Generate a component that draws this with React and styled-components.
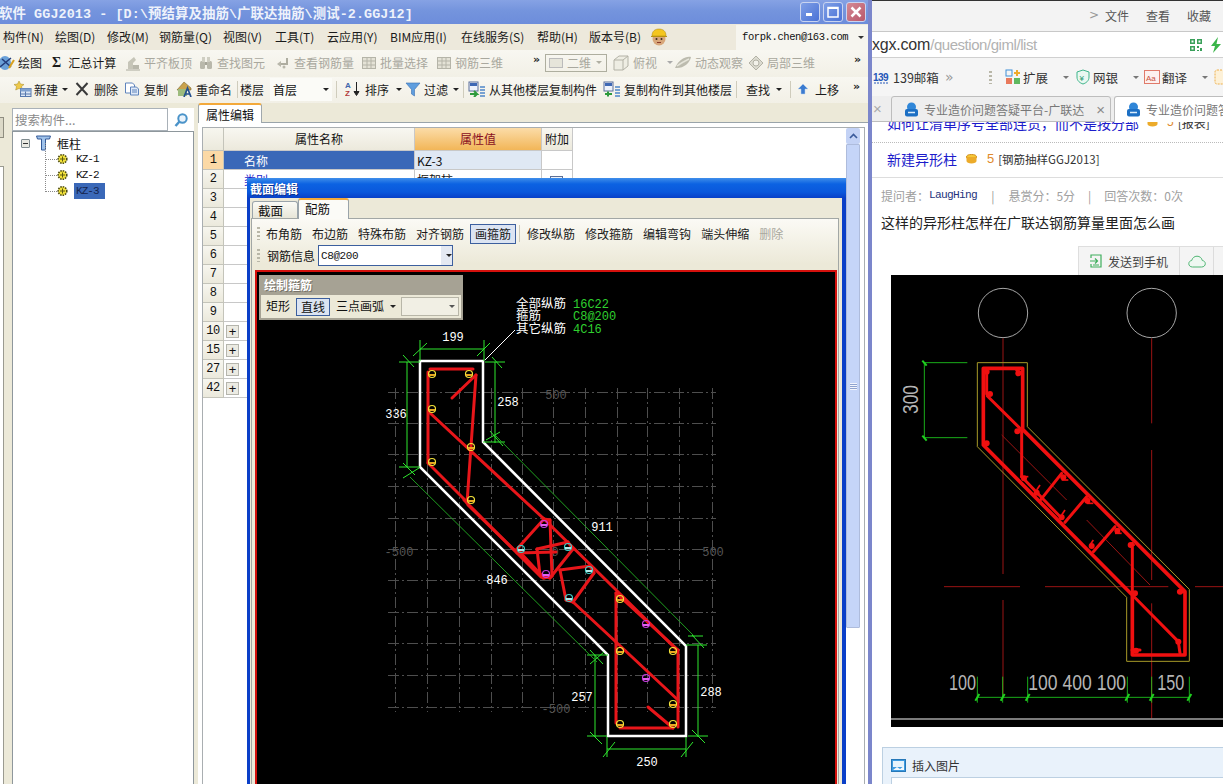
import React from "react";
import styled, { createGlobalStyle } from "styled-components";

const CN = `"Noto Sans CJK SC", "Liberation Sans", sans-serif`;
const MONO = `"Liberation Mono", "Noto Sans CJK SC", monospace`;

const GlobalStyle = createGlobalStyle`
  html, body { margin: 0; padding: 0; background: #fff; }
  body { font-family: ${CN}; font-size: 12px; color: #111; }
  * { box-sizing: border-box; }
`;

const Screen = styled.div`
  display: flex;
  width: 1223px;
  height: 784px;
  overflow: hidden;
`;

/* ---------- left window ---------- */

const LeftWindow = styled.div`
  position: relative;
  width: 872px;
  height: 784px;
  flex: none;
  display: flex;
  flex-direction: column;
  background: #ece9d8;
  border-right: 4px solid #7b86cb;
  overflow: hidden;
`;

const TitleBar = styled.div`
  height: 24px;
  flex: none;
  display: flex;
  align-items: center;
  padding-right: 2px;
  background: linear-gradient(180deg, #86a2e4 0%, #7494dd 45%, #6d8ddb 100%);
`;

const TitleText = styled.div`
  margin-left: -1px;
  font-family: ${MONO};
  font-size: 13.4px;
  font-weight: 700;
  letter-spacing: 0.1px;
  color: #eef2fb;
  white-space: pre;
`;

const WinButtons = styled.div`
  margin-left: auto;
  display: flex;
  gap: 3px;
`;

const WinButton = styled.div`
  width: 20px;
  height: 20px;
  display: flex;
  align-items: center;
  justify-content: center;
  border: 1px solid #c9d4f0;
  border-radius: 3px;
  background: ${(p) =>
    p.$close
      ? "linear-gradient(135deg, #d48a94, #b9586c)"
      : "linear-gradient(135deg, #7f9fe6, #4a72d6)"};
`;

const MenuBar = styled.div`
  height: 26px;
  flex: none;
  display: flex;
  align-items: center;
  padding-left: 3px;
  background: #ede9dc;
`;

const MenuItem = styled.div`
  width: ${(p) => p.$w}px;
  flex: none;
  margin-top: -2px;
  color: #1a1a1a;
  white-space: nowrap;
`;

const Account = styled.div`
  margin-left: auto;
  width: 132px;
  height: 25px;
  display: flex;
  align-items: center;
  justify-content: space-between;
  padding: 0 4px 0 6px;
  background: #f6f5ef;
  font-family: ${MONO};
  font-size: 10.5px;
  letter-spacing: -0.4px;
`;

const ToolBar = styled.div`
  height: ${(p) => p.$h}px;
  flex: none;
  display: flex;
  align-items: center;
  padding-left: ${(p) => p.$pad || 0}px;
  padding-bottom: 2px;
  background: linear-gradient(180deg, #f8f7f1 0%, #f2f0e6 100%);
`;

const ToolItem = styled.div`
  width: ${(p) => p.$w}px;
  flex: none;
  display: flex;
  align-items: center;
  gap: ${(p) => (p.$gap === undefined ? 3 : p.$gap)}px;
  margin-left: ${(p) => p.$ml || 0}px;
  white-space: nowrap;
  color: ${(p) => (p.$off ? "#a9a89e" : "#1a1a1a")};
`;

const SumMark = styled.b`
  font-family: "Liberation Serif", serif;
  font-size: 14px;
`;

const ToolSep = styled.div`
  width: 1px;
  height: 17px;
  margin: 0 ${(p) => (p.$mr === undefined ? p.$m || 3 : p.$mr)}px 0 ${(p) => p.$m || 3}px;
  flex: none;
  background: #cfccbc;
`;

const Caret = styled.span`
  width: 0;
  height: 0;
  flex: none;
  margin-left: ${(p) => p.$m || 4}px;
  border-left: 3px solid transparent;
  border-right: 3px solid transparent;
  border-top: 3px solid ${(p) => p.$c || "#222"};
`;

const More = styled.div`
  font-family: "DejaVu Sans", sans-serif;
  font-size: 11px;
  font-weight: 700;
  margin-top: -6px;
  color: #222;
  flex: none;
  width: ${(p) => p.$w || 12}px;
`;

const ViewSelect = styled.div`
  width: 62px;
  height: 18px;
  flex: none;
  display: flex;
  align-items: center;
  gap: 4px;
  padding: 0 3px;
  border: 1px solid #aeae9f;
  color: #a9a89e;
`;

const FloorSelect = styled.div`
  width: 62px;
  height: 23px;
  flex: none;
  display: flex;
  align-items: center;
  justify-content: space-between;
  padding: 0 3px;
  background: #fbfbf7;
`;

const Body = styled.div`
  flex: 1;
  min-height: 0;
  display: flex;
`;

const LeftRail = styled.div`
  width: 12px;
  flex: none;
  padding-top: 14px;
`;

const RailButton = styled.div`
  width: 4px;
  height: 21px;
  background: #dcd9c8;
  border: 1px solid #8f8d80;
  border-left: 0;
`;

const RailColumn = styled.div`
  width: 4px;
  height: 620px;
  margin-top: 28px;
  background: #fff;
  border-right: 1px solid #9a9a90;
  border-top: 1px solid #9a9a90;
`;

const Sidebar = styled.div`
  width: 182px;
  flex: none;
  display: flex;
  flex-direction: column;
  padding-top: 5px;
`;

const SearchRow = styled.div`
  height: 24px;
  flex: none;
  display: flex;
  background: #fff;
  border-bottom: 1px solid #8e979c;
`;

const SearchInput = styled.div`
  width: 156px;
  height: 23px;
  padding-left: 2px;
  line-height: 21px;
  font-size: 12.5px;
  color: #8a8a8a;
  border: 1px solid #a9b1b8;
`;

const SearchButton = styled.div`
  flex: 1;
  display: flex;
  align-items: center;
  justify-content: center;
`;

const TreePanel = styled.div`
  flex: 1;
  background: #fff;
  border-left: 1px solid #8e979c;
  border-right: 1px solid #8e979c;
  padding: 3px 0 0 8px;
`;

const TreeRoot = styled.div`
  display: flex;
  align-items: center;
  height: 16px;
  gap: 6px;
`;

const Expander = styled.div`
  width: 9px;
  height: 9px;
  flex: none;
  border: 1px solid #7f8b8f;
  border-radius: 1px;
  background: #e9e9e2;
  display: flex;
  align-items: center;
  justify-content: center;
  &::after {
    content: "";
    width: 5px;
    height: 1px;
    background: #333;
  }
`;

const TreeBranch = styled.div`
  margin-left: 36px;
`;

const TreeRow = styled.div`
  position: relative;
  height: 16px;
  display: flex;
  align-items: center;
  gap: 6px;
  &::before {
    content: "";
    position: absolute;
    left: -12px;
    top: -8px;
    width: 11px;
    height: 16px;
    border-left: 1px dotted #8a8a8a;
    border-bottom: 1px dotted #8a8a8a;
  }
`;

const TreeLabel = styled.div`
  width: 31px;
  height: 16px;
  padding-left: 2px;
  line-height: 16px;
  font-family: ${MONO};
  font-size: 11px;
  letter-spacing: -0.95px;
  color: ${(p) => (p.$sel ? "#15244e" : "#111")};
  background: ${(p) => (p.$sel ? "#3a68b8" : "transparent")};
`;

const MainPanel = styled.div`
  margin-left: 4px;
  flex: 1;
  min-width: 0;
  display: flex;
  flex-direction: column;
`;

const PanelTab = styled.div`
  width: 64px;
  height: 20px;
  flex: none;
  padding-left: 7px;
  line-height: 19px;
  background: #fff;
  border-top: 2px solid #f3a93a;
  border-left: 1px solid #a0a8ac;
  border-right: 1px solid #a0a8ac;
  border-radius: 3px 3px 0 0;
  margin-bottom: -1px;
  position: relative;
  z-index: 1;
`;

const PanelBody = styled.div`
  flex: 1;
  min-height: 0;
  display: flex;
  background: #fff;
  border-top: 1px solid #9aa4aa;
  padding: 4px 3px 0 4px;
`;

const TableFrame = styled.div`
  flex: 1;
  display: flex;
  border: 1px solid #a9aeb1;
  border-bottom: 0;
`;

const Grid = styled.div`
  flex: 1;
`;

const GridRow = styled.div`
  display: flex;
  height: ${(p) => p.$h}px;
`;

const NumCell = styled.div`
  width: 21px;
  flex: none;
  display: flex;
  align-items: center;
  justify-content: center;
  font-family: ${MONO};
  font-size: 12px;
  letter-spacing: -0.5px;
  border-bottom: 1px solid #c4c4ba;
  border-right: 1px solid #c4c4ba;
  background: ${(p) =>
    p.$on ? "#fbd9a6" : "linear-gradient(180deg, #f7f6ef, #ebe9dc)"};
`;

const Cell = styled.div`
  width: ${(p) => p.$w}px;
  flex: none;
  display: flex;
  align-items: center;
  padding-left: ${(p) => p.$pad || 0}px;
  border-bottom: 1px solid #c8c8c8;
  border-right: 1px solid #c8c8c8;
  background: ${(p) => p.$bg || "#fff"};
  color: ${(p) => p.$c || "#111"};
`;

const HeadCell = styled(Cell)`
  justify-content: center;
  padding: 0 0 2px;
  background: ${(p) =>
    p.$hot
      ? "linear-gradient(180deg, #fbdca8, #f2b658)"
      : "linear-gradient(180deg, #f8f7f1, #ece9dc)"};
  color: ${(p) => (p.$hot ? "#8a0f22" : "#111")};
`;

const PlusBox = styled.div`
  width: 13px;
  height: 13px;
  border: 1px solid #b5b5ad;
  background: #ecebe3;
  display: flex;
  align-items: center;
  justify-content: center;
  font-family: "Liberation Sans", sans-serif;
  font-size: 13px;
  line-height: 1;
  margin-left: 2px;
`;

const CheckBox = styled.div`
  width: 13px;
  height: 13px;
  margin: 6px 0 0 8px;
  border: 1px solid #5c6f96;
  background: #eef1f6;
`;

const ScrollBar = styled.div`
  width: 18px;
  flex: none;
  padding: 0 4px 0 0;
  display: flex;
  flex-direction: column;
`;

const ScrollUp = styled.div`
  height: 16px;
  flex: none;
  display: flex;
  align-items: center;
  justify-content: center;
  background: #c3d2f5;
  border-radius: 2px;
  font-size: 9px;
`;

const ScrollThumb = styled.div`
  height: 484px;
  flex: none;
  background: #c5d5f8;
  border: 1px solid #aebcdc;
  border-radius: 1px;
  display: flex;
  align-items: center;
  justify-content: center;
  &::after {
    content: "";
    width: 7px;
    height: 7px;
    background: repeating-linear-gradient(180deg, #f2f5fd 0 1px, #8fa3cf 1px 2px);
  }
`;

/* ---------- section editor dialog ---------- */

const Dialog = styled.div`
  position: absolute;
  left: 247px;
  top: 178px;
  width: 599px;
  height: 620px;
  display: flex;
  flex-direction: column;
  background: #ece9d8;
  border: 3px solid #0a3fc8;
  border-width: 0 4px 0 3px;
`;

const DialogTitle = styled.div`
  height: 20px;
  flex: none;
  margin: 0 -4px 0 -3px;
  padding-left: 3px;
  display: flex;
  align-items: center;
  background: linear-gradient(180deg, #3f8eea 0%, #0c62e2 30%, #0a58dc 70%, #0840c8 100%);
  color: #fff;
  font-weight: 700;
  text-shadow: 1px 1px 0 #0a2f90;
`;

const DialogTabs = styled.div`
  height: 20px;
  flex: none;
  display: flex;
  align-items: flex-end;
  padding-left: 2px;
`;

const DialogTab = styled.div`
  height: ${(p) => (p.$on ? 21 : 17)}px;
  width: ${(p) => (p.$on ? 51 : 46)}px;
  flex: none;
  padding-left: ${(p) => (p.$on ? 6 : 5)}px;
  line-height: 17px;
  font-size: 12.5px;
  background: ${(p) => (p.$on ? "#fbfbf7" : "linear-gradient(180deg, #fafaf5, #e8e6d8)")};
  border: 1px solid #9aa4aa;
  border-bottom: 0;
  border-top: ${(p) => (p.$on ? "2px solid #f3a93a" : "1px solid #9aa4aa")};
  border-radius: 3px 3px 0 0;
  position: relative;
  z-index: 1;
  margin-bottom: ${(p) => (p.$on ? -1 : 0)}px;
`;

const DialogBody = styled.div`
  flex: 1;
  min-height: 0;
  margin-left: 1px;
  margin-right: 3px;
  padding: 4px 0 0 3px;
  display: flex;
  flex-direction: column;
  border: 1px solid #a2a7a5;
  border-bottom: 0;
  background: linear-gradient(180deg, #fbfaf5 0, #ece9d8 45px);
`;

const DialogRow = styled.div`
  height: ${(p) => p.$h}px;
  flex: none;
  display: flex;
  align-items: center;
`;

const Grip = styled.div`
  width: 3px;
  height: 13px;
  flex: none;
  margin: 0 6px 0 2px;
  background: repeating-linear-gradient(180deg, #b9b7a8 0 2px, transparent 2px 4px);
`;

const DialogAction = styled.div`
  flex: none;
  height: 20px;
  display: flex;
  align-items: center;
  white-space: nowrap;
  margin-right: ${(p) => (p.$on ? 0 : 10)}px;
  color: ${(p) => (p.$off ? "#a9a89e" : "#1a1a1a")};
  ${(p) =>
    p.$on
      ? `padding: 0 4px; background: #dce4f2; border: 1px solid #3c5f9e; margin-left: -4px;`
      : ""}
`;

const ActionGap = styled.span`
  width: 4px;
  flex: none;
`;

const RebarLabel = styled.div`
  margin-left: 1px;
  margin-right: 3px;
`;

const RebarSelect = styled.div`
  width: 135px;
  height: 21px;
  display: flex;
  align-items: center;
  justify-content: space-between;
  padding-left: 2px;
  background: #fff;
  border: 1px solid #3c5f9e;
  font-family: ${MONO};
  font-size: 11px;
  letter-spacing: -0.4px;
`;

const RebarArrow = styled.div`
  width: 11px;
  height: 19px;
  background: #e4e9f2;
  display: flex;
  align-items: center;
  justify-content: center;
`;

const Canvas = styled.div`
  position: relative;
  width: 582px;
  height: 520px;
  margin-top: 3px;
  flex: none;
  background: #000;
  border: 2px solid #d4100c;
  border-bottom: 0;
  svg { display: block; }
`;

const Palette = styled.div`
  position: absolute;
  left: 2px;
  top: 3px;
  width: 204px;
  height: 45px;
  background: #ece9d8;
  border: 2px solid #a6a294;
  border-top-width: 1px;
  display: flex;
  flex-direction: column;
`;

const PaletteTitle = styled.div`
  height: 19px;
  flex: none;
  padding-left: 3px;
  line-height: 18px;
  background: #a6a294;
  color: #fff;
  font-weight: 700;
  text-shadow: 1px 1px 0 #77736a;
`;

const PaletteRow = styled.div`
  flex: 1;
  display: flex;
  align-items: center;
  padding-left: 5px;
`;

const PaletteBtn = styled.div`
  flex: none;
  height: 18px;
  line-height: 16px;
  margin-right: ${(p) => p.$mr || 0}px;
  ${(p) =>
    p.$on
      ? `padding: 0 4px; background: #dce4f2; border: 1px solid #3c5f9e;`
      : ""}
`;

const PaletteSelect = styled.div`
  width: 58px;
  height: 19px;
  margin-left: 5px;
  padding-right: 3px;
  display: flex;
  align-items: center;
  justify-content: flex-end;
  background: #f1efe4;
  border: 1px solid #b8b6a8;
`;

/* ---------- right browser window ---------- */

const RightWindow = styled.div`
  flex: 1;
  min-width: 0;
  height: 784px;
  display: flex;
  flex-direction: column;
  background: #fff;
  overflow: hidden;
`;

const BrowserTop = styled.div`
  height: 32px;
  flex: none;
  display: flex;
  align-items: center;
  padding-left: 217px;
  background: #f3f3f3;
  border-top: 1px solid #333;
  border-bottom: 1px solid #c8c8c8;
  color: #444;
`;

const TopLink = styled.div`
  flex: none;
  width: ${(p) => p.$w}px;
  margin-top: -2px;
  color: #555;
`;

const TopChevron = styled(TopLink)`
  font-family: "DejaVu Sans", sans-serif;
  color: #999;
`;

const AddressBar = styled.div`
  height: 26px;
  flex: none;
  display: flex;
  align-items: center;
  background: #fff;
  border-bottom: 1px solid #d0d0d0;
  font-family: "Liberation Sans", sans-serif;
  font-size: 16px;
  white-space: nowrap;
`;

const Host = styled.span`
  color: #333;
  letter-spacing: -0.2px;
`;

const UrlPath = styled.span`
  color: #b2b2b2;
  font-size: 15px;
  letter-spacing: -0.45px;
`;

const AddressIcons = styled.div`
  margin-left: auto;
  display: flex;
  align-items: center;
  gap: 7px;
  padding-right: 1px;
`;

const BookmarkBar = styled.div`
  height: 38px;
  flex: none;
  display: flex;
  align-items: center;
  background: #f5f5f5;
  color: #333;
  padding-left: 1px;
`;

const Bookmark = styled.div`
  width: ${(p) => p.$w}px;
  flex: none;
  display: flex;
  align-items: center;
  gap: 2px;
  white-space: nowrap;
  font-size: 12.5px;
`;

const Chevrons = styled(Bookmark)`
  font-family: "DejaVu Sans", sans-serif;
  font-size: 14px;
  color: #999;
`;

const TabStrip = styled.div`
  height: 26px;
  flex: none;
  display: flex;
  align-items: flex-end;
  background: #eeeeee;
  color: #777;
  border-bottom: 1px solid #bdbdbd;
  position: relative;
  z-index: 2;
`;

const BrowserTab = styled.div`
  flex: none;
  width: ${(p) => p.$w}px;
  height: 26px;
  margin-left: ${(p) => p.$ml || 0}px;
  margin-bottom: -1px;
  display: flex;
  align-items: center;
  gap: 5px;
  padding-left: ${(p) => p.$pad || 12}px;
  white-space: nowrap;
  overflow: hidden;
  border: 1px solid #bdbdbd;
  border-bottom: ${(p) => (p.$on ? "0" : "1px solid #bdbdbd")};
  border-radius: 3px 3px 0 0;
  background: ${(p) => (p.$on ? "#fff" : "#eeeeee")};
  position: relative;
  z-index: 1;
`;

const TabClose = styled.div`
  flex: none;
  margin-left: 7px;
  font-family: "Liberation Sans", sans-serif;
  font-size: 15px;
  color: #8a8a8a;
`;

const CutTabClose = styled.div`
  width: 19px;
  flex: none;
  height: 24px;
  padding-left: 1px;
  line-height: 24px;
  font-family: "Liberation Sans", sans-serif;
  font-size: 15px;
  color: #aaa;
`;

const QuestionList = styled.div`
  flex: none;
  height: 56px;
  overflow: hidden;
  border-bottom: 1px solid #ddd;
`;

const ClippedRow = styled.div`
  height: 30px;
  margin-top: -9px;
  padding: 0 0 0 15px;
  display: flex;
  align-items: flex-start;
  white-space: nowrap;
  border-bottom: 1px dotted #bbb;
`;

const Reward = styled.span`
  flex: none;
  color: #e08a2c;
  font-family: "Liberation Sans", sans-serif;
  font-size: ${(p) => p.$s || 12}px;
  margin: ${(p) => p.$top || 0}px ${(p) => p.$m || 8}px 0;
  line-height: 18px;
`;

const LinkText = styled.span`
  flex: none;
  color: ${(p) => p.$c || "#1c1ccb"};
  font-size: ${(p) => p.$s || 12}px;
  margin-left: ${(p) => p.$ml || 0}px;
  margin-top: ${(p) => p.$top || 0}px;
  white-space: nowrap;
`;

const QuestionTitle = styled.div`
  height: 31px;
  padding-left: 15px;
  display: flex;
  align-items: center;
`;

const MetaRow = styled.div`
  flex: none;
  margin-top: 7px;
  height: 20px;
  padding-left: 9px;
  display: flex;
  align-items: center;
  color: #a0a0a0;
  white-space: nowrap;
`;

const MetaSep = styled.span`
  margin: 0 ${(p) => p.$m || 13}px;
  color: #999;
`;

const Asker = styled.span`
  font-family: ${MONO};
  font-size: 11.2px;
  letter-spacing: -0.7px;
  color: #26357d;
`;

const QuestionText = styled.div`
  flex: none;
  margin-top: 7px;
  padding-left: 9px;
  height: 20px;
  line-height: 20px;
  font-size: 14px;
  color: #222;
  white-space: nowrap;
`;

const ShareBar = styled.div`
  flex: none;
  height: 29px;
  margin-top: 14px;
  margin-left: 206px;
  width: 160px;
  display: flex;
  align-items: center;
  background: #f4f4f4;
  border: 1px solid #dedede;
  border-bottom: 0;
`;

const ShareItem = styled.div`
  width: ${(p) => p.$w}px;
  height: 100%;
  flex: none;
  display: flex;
  align-items: center;
  justify-content: center;
  gap: 6px;
  border-right: 1px solid #dcdcdc;
  color: #444;
`;

const CadImage = styled.div`
  flex: none;
  margin-left: 19px;
  width: 332px;
  height: 452px;
  background: #000;
  svg { display: block; }
`;

const InsertPanel = styled.div`
  flex: none;
  height: 60px;
  margin: 20px -20px 0 10px;
  padding: 8px 0 0 8px;
  display: flex;
  flex-direction: column;
  background: #e9f2fb;
  border: 1px solid #bcd0e2;
`;

const InsertHead = styled.div`
  display: flex;
  align-items: center;
  gap: 6px;
  height: 18px;
  color: #333;
`;

const InsertBox = styled.div`
  flex: 1;
  margin-top: 3px;
  background: #fff;
  border: 1px solid #bcd0e2;
`;

/* ---------- icons ---------- */

const IconSvg = styled.svg`
  flex: none;
  display: block;
`;

const Ic = ({ w = 16, h = 16, children }) => (
  <IconSvg width={w} height={h} viewBox={`0 0 ${w} ${h}`}>
    {children}
  </IconSvg>
);

const GridIcon = () => (
  <Ic>
    <rect x="1.5" y="2.5" width="13" height="11" fill="#e4e2d6" stroke="#b5b4a8" />
    <path d="M1.5 6h13M1.5 10h13M6 2.5v11M10 2.5v11" stroke="#b5b4a8" />
  </Ic>
);

const GlobeIcon = () => (
  <Ic>
    <ellipse cx="5" cy="8" rx="6" ry="7" fill="#6aa0d8" />
    <path d="M0 12 L11 3 M2 4 L11 12" stroke="#223c7a" strokeWidth="1.5" />
    <path d="M9 13 L14 5" stroke="#d8a020" strokeWidth="2" />
  </Ic>
);

const BoxOff = () => (
  <Ic>
    <path d="M3 14V7l6-5 2 3-3 3v6z" fill="#c6c5b8" />
    <rect x="8" y="10" width="6" height="4" fill="#b8b7ab" />
    <path d="M1 15h14" stroke="#aaa99c" />
  </Ic>
);

const BinocularsOff = () => (
  <Ic>
    <rect x="2" y="6" width="5" height="8" rx="1.5" fill="#b9b8ab" />
    <rect x="9" y="6" width="5" height="8" rx="1.5" fill="#b9b8ab" />
    <rect x="4" y="2" width="3" height="5" fill="#cfcec2" />
    <rect x="9" y="2" width="3" height="5" fill="#cfcec2" />
    <rect x="7" y="7" width="2" height="3" fill="#a5a497" />
  </Ic>
);

const HookOff = () => (
  <Ic>
    <path d="M12 3v6H5" fill="none" stroke="#aeada0" strokeWidth="2" />
    <path d="M6 6 L2 9 L6 12z" fill="#b8b7aa" />
    <circle cx="9" cy="12" r="1.5" fill="#b8b7aa" />
  </Ic>
);

const CubeOff = () => (
  <Ic w={18} h={18}>
    <path d="M2 6l5-4h9v10l-5 4H2z" fill="#eeede3" stroke="#b3b2a6" />
    <path d="M2 6h9v10M11 6l5-4" fill="none" stroke="#b3b2a6" />
  </Ic>
);

const OrbitOff = () => (
  <Ic w={18} h={16}>
    <path d="M1 13C5 4 12 1 17 2c-1 6-8 12-16 11z" fill="#bcbbae" />
    <path d="M3 11c4-3 8-5 12-7" stroke="#e6e5da" strokeWidth="1.4" />
  </Ic>
);

const PartOff = () => (
  <Ic>
    <path d="M8 1l7 7-7 7-7-7z" fill="#dcdbd0" stroke="#b3b2a6" />
    <circle cx="8" cy="8" r="3" fill="#f3f2ea" stroke="#b3b2a6" />
  </Ic>
);

const NewIcon = () => (
  <Ic w={18}>
    <path d="M5 0l1.5 3 3.5.5-2.5 2 .8 3.500L5 7.500 1.700 9l.8-3.500L0 3.500 3.500 3z" fill="#eec94a" stroke="#a48824" strokeWidth=".5" />
    <rect x="6.500" y="7.500" width="10.500" height="8" fill="#dbe6f5" stroke="#5678ad" />
    <rect x="6.500" y="7.500" width="10.500" height="3" fill="#7ea0cf" />
    <path d="M6.500 13h10.500M11.500 10.500V15.500" stroke="#5678ad" />
  </Ic>
);

const CrossIcon = () => (
  <Ic w={14}>
    <path d="M1.500 2 L12.500 14 M12.500 2 L1.500 14" stroke="#3a3a3a" strokeWidth="2" />
  </Ic>
);

const CopyIcon = () => (
  <Ic>
    <path d="M1.500 2h7l2 2v8h-9z" fill="#fff" stroke="#5f84bc" />
    <path d="M6.500 6h6l2 2v6h-8z" fill="#dfe9f7" stroke="#5f84bc" />
    <path d="M8 9h5M8 11h5" stroke="#5f84bc" />
  </Ic>
);

const RenameIcon = () => (
  <Ic>
    <path d="M1 9L8 1l7 6v2z" fill="#c9a24c" stroke="#7e6a30" strokeWidth=".6" />
    <rect x="2" y="8" width="9" height="7" fill="#9dbb7d" />
    <path d="M8 16l3.500-9 3.500 9M9.500 13h4" fill="none" stroke="#23508f" strokeWidth="1.700" />
  </Ic>
);

const SortIcon = () => (
  <Ic>
    <text x="0" y="7" fontFamily="Liberation Sans" fontSize="8" fontWeight="700" fill="#3f66ab">A</text>
    <text x="0" y="15" fontFamily="Liberation Sans" fontSize="8" fontWeight="700" fill="#b23a3a">Z</text>
    <path d="M11.500 1v12M9 10.500l2.500 4 2.500-4z" fill="#222" stroke="#222" />
  </Ic>
);

const FunnelIcon = () => (
  <Ic>
    <path d="M1 2h14L9.500 8.500V15L6.500 13V8.500z" fill="#5f9ede" stroke="#3b6fb0" strokeWidth=".6" />
  </Ic>
);

const FloorCopyIcon = ({ flip }) => (
  <Ic w={18}>
    <rect x="1" y="1" width="9" height="9" fill="#eef2fa" stroke="#5b6f9a" />
    <rect x="2" y="2" width="7" height="3" fill="#3e68b4" />
    <path d="M12 6h5M12 9h5M12 12h5M12 15h5" stroke="#4f87c9" strokeWidth="1.500" />
    <path d={flip ? "M2 13h7M5 10.500v5" : "M2 13h7l-3-3M9 13l-3 3"} stroke="#2d9a3c" strokeWidth="2" fill="none" />
  </Ic>
);

const UpIcon = () => (
  <Ic w={12} h={12}>
    <path d="M6 1l5 5H8v5H4V6H1z" fill="#3b7bd0" stroke="#b9d2ef" strokeWidth=".5" />
  </Ic>
);

const Helmet = () => (
  <Ic w={18} h={18}>
    <circle cx="9" cy="11" r="6.500" fill="#d8a77a" />
    <path d="M2 8c0-5 3-7 7-7s7 2 7 7z" fill="#f4c61f" stroke="#a88510" strokeWidth=".5" />
    <path d="M1 8.500h16" stroke="#b79212" strokeWidth="1" />
    <circle cx="6.500" cy="11" r="1" fill="#3a2a20" />
    <circle cx="11.500" cy="11" r="1" fill="#3a2a20" />
    <path d="M7 14.500h4" stroke="#8a3a2a" />
  </Ic>
);

const SearchGlass = () => (
  <Ic>
    <circle cx="9.500" cy="6.500" r="4.200" fill="#eaf3fb" stroke="#4a93c9" strokeWidth="2" />
    <path d="M6.500 9.500 L2.500 14" stroke="#4a93c9" strokeWidth="2.500" />
  </Ic>
);

const ColumnIcon = () => (
  <Ic w={15} h={16}>
    <path d="M0.500 1h14l-1 3H9.500v11h-4V4H1.500z" fill="#9fc2ea" stroke="#345a98" strokeWidth="1" />
  </Ic>
);

const GearIcon = () => (
  <Ic w={11} h={12}>
    <circle cx="5.500" cy="6" r="4.300" fill="#f3e23a" stroke="#4b4a10" strokeDasharray="1.500 1" strokeWidth="1.600" />
    <path d="M3 6h5M5.500 3.500v5" stroke="#5c5a12" />
  </Ic>
);

const QrIcon = () => (
  <Ic w={14} h={14}>
    <path d="M1 1h5v5H1zM8 1h5v5H8zM1 8h5v5H1zM8 8h2v2H8zM11 10h2v3h-2zM8 12h2v1H8z" fill="#3aa05a" />
    <path d="M2.500 2.500h2v2h-2zM9.500 2.500h2v2h-2zM2.500 9.500h2v2h-2z" fill="#fff" />
  </Ic>
);

const BoltIcon = () => (
  <Ic w={12} h={16}>
    <path d="M8 0L1 9h4l-2 7 8-9H6.500z" fill="#3bb54a" />
  </Ic>
);

const MailIcon = () => (
  <Ic w={18} h={14}>
    <text x="0" y="11" fontFamily="Liberation Sans" fontSize="10" fontWeight="700" fill="#2456b8" letterSpacing="-.5">139</text>
    <path d="M1 13h15" stroke="#2456b8" strokeDasharray="2 1" />
  </Ic>
);

const ExtendIcon = () => (
  <Ic w={16} h={16}>
    <rect x="1" y="1" width="6" height="6" fill="none" stroke="#3f8fd8" />
    <rect x="1" y="9" width="6" height="6" fill="#e9795c" />
    <rect x="9" y="9" width="6" height="6" fill="#60b860" />
    <path d="M12 1v6M9 4h6" stroke="#efaa2c" strokeWidth="2" />
  </Ic>
);

const ShieldIcon = () => (
  <Ic w={16} h={16}>
    <path d="M8 1l6 2v5c0 4-3 6-6 7-3-1-6-3-6-7V3z" fill="#e9f8f1" stroke="#3fb58b" />
    <text x="4.500" y="11.500" fontFamily="Liberation Sans" fontSize="8" fill="#2d9c74">¥</text>
  </Ic>
);

const TranslateIcon = () => (
  <Ic w={16} h={16}>
    <rect x=".5" y="1.500" width="15" height="13" fill="#fdf0ee" stroke="#e07a6a" />
    <text x="2" y="11.500" fontFamily="Liberation Sans" fontSize="8" fill="#c8503e">Aa</text>
  </Ic>
);

const OrangeIcon = () => (
  <Ic w={16} h={16}>
    <rect x="1" y="1" width="14" height="14" rx="2" fill="#fdf1d8" stroke="#eeb04c" strokeDasharray="2 1" />
  </Ic>
);

const SiteIcon = () => (
  <Ic w={15} h={15}>
    <circle cx="7.500" cy="5" r="4.500" fill="#2f86d8" />
    <rect x="1" y="7" width="13" height="7.500" rx="2" fill="#1c6fc4" />
    <path d="M4 10.500h7" stroke="#d9ecfb" strokeWidth="1.500" />
  </Ic>
);

const CoinIcon = () => (
  <Ic w={11} h={10}>
    <ellipse cx="5.500" cy="3" rx="5" ry="2.500" fill="#f5c838" stroke="#d18f1c" />
    <path d="M.5 3v4c0 1.400 2.200 2.500 5 2.500s5-1.100 5-2.500V3" fill="#ecab2a" />
  </Ic>
);

const PhoneSendIcon = () => (
  <Ic w={12} h={14}>
    <path d="M1 4V1h10v12H1v-3" fill="none" stroke="#3fae5d" strokeWidth="1.200" />
    <path d="M0 7h7M5 4.500L7.500 7 5 9.500" fill="none" stroke="#3fae5d" strokeWidth="1.200" />
    <path d="M3 11h6" stroke="#3fae5d" />
  </Ic>
);

const CloudIcon = () => (
  <Ic w={18} h={13}>
    <path d="M4.500 12C2 12 .8 10.300.8 8.700 .8 7 2 5.700 3.700 5.500 4.300 3 6.300 1.200 9 1.200c2.800 0 4.800 1.800 5.300 4.300 1.700.2 3 1.500 3 3.200S16 12 13.500 12z" fill="#eef8f1" stroke="#4fb573" />
  </Ic>
);

const PictureIcon = () => (
  <Ic w={15} h={13}>
    <rect x=".5" y=".5" width="14" height="12" fill="#3d9ae0" stroke="#2678b8" />
    <rect x="2" y="2" width="11" height="6" fill="#e6f3fc" />
    <path d="M2 11l4-3 3 2 4-3v4z" fill="#f4f9fd" />
  </Ic>
);

/* ---------- CAD drawings ---------- */

const Lines = ({ data, color, width = 1, dash, cap = "butt" }) => (
  <g stroke={color} strokeWidth={width} strokeDasharray={dash} fill="none" strokeLinecap={cap}>
    {data.map((l, i) => (
      <line key={i} x1={l[0]} y1={l[1]} x2={l[2]} y2={l[3]} />
    ))}
  </g>
);

const gridX = [395, 427, 459, 491, 522, 553, 585, 617, 647, 679, 712];
const gridY = [392, 423, 454, 486, 518, 549, 580, 612, 643, 675, 707];

const greenDims = [
  [420, 349, 484, 349], [420, 340, 420, 361], [484, 340, 484, 361],
  [413, 356, 427, 343], [477, 356, 490, 343],
  [399, 362, 420, 362], [407, 362, 407, 467], [403, 355, 414, 367],
  [399, 467, 420, 467], [403, 463, 415, 475], [403, 478, 419, 468],
  [485, 362, 505, 362], [495, 362, 495, 443], [492, 357, 502, 368],
  [483, 442, 505, 442], [486, 440, 500, 432], [490, 431, 503, 446],
  [686, 645, 707, 645], [698, 645, 698, 737], [688, 636, 703, 636], [692, 635, 704, 648],
  [688, 736, 708, 736], [692, 730, 705, 743],
  [595, 655, 595, 737], [587, 655, 608, 655], [587, 736, 607, 736],
  [590, 650, 603, 664], [590, 664, 604, 652], [590, 732, 602, 744],
  [607, 749, 686, 749], [607, 737, 607, 757], [686, 737, 686, 757],
  [603, 757, 615, 742], [681, 757, 693, 742],
];

const thinGreens = [
  [495, 435, 695, 637],
  [410, 477, 597, 662],
];

const redBars = [
  [430, 369, 473, 369], [476, 375, 467, 503], [476, 375, 452, 398],
  [428, 372, 428, 463], [428, 463, 468, 503], [468, 505, 543, 578], [464, 500, 541, 577],
  [430, 413, 543, 518], [543, 518, 677, 650], [678, 650, 678, 727],
  [620, 728, 673, 728], [616, 593, 616, 723], [616, 642, 678, 700],
  [648, 707, 673, 728], [573, 602, 616, 642], [616, 593, 678, 650],
  [517, 549, 544, 519], [544, 519, 550, 520], [550, 520, 552, 576], [552, 576, 544, 578], [544, 578, 517, 549],
  [537, 549, 568, 542], [568, 542, 573, 549], [573, 549, 550, 578], [550, 578, 540, 575], [540, 575, 537, 549],
  [517, 553, 556, 552],
  [560, 570, 590, 566], [590, 566, 594, 573], [594, 573, 573, 602], [573, 602, 566, 600], [566, 600, 560, 570],
];

const yellowDots = [
  [432, 374], [469, 374], [432, 409], [471, 447], [432, 462], [471, 500],
  [620, 599], [673, 651], [620, 651], [673, 704], [620, 724], [673, 724],
];
const tealDots = [[521, 549], [568, 547], [589, 570], [569, 598]];
const pinkDots = [[544, 524], [546, 574], [646, 624], [646, 678]];

const Dots = ({ data, color, inner }) => (
  <g>
    {data.map((d, i) => (
      <g key={i}>
        <circle cx={d[0]} cy={d[1]} r="3.500" fill="none" stroke={color} strokeWidth="1.200" />
        <line x1={d[0] - 3} y1={d[1] + 1} x2={d[0] + 3} y2={d[1] + 1} stroke={inner || color} strokeWidth="2" />
      </g>
    ))}
  </g>
);

const CadLabel = styled.text`
  font-family: ${MONO};
  font-size: 12px;
  fill: ${(p) => p.$fill || "#fff"};
  text-anchor: ${(p) => p.$anchor || "middle"};
`;

const CnLabel = styled.text`
  font-family: ${CN};
  font-size: 12.5px;
  fill: #fff;
`;

const SectionDrawing = () => (
  <svg width="578" height="512" viewBox="257 272 578 512">
    <Lines
      color="#4e4e4e"
      dash="11 3 2 3"
      data={[
        ...gridX.map((x) => [x + 0.5, 388, x + 0.5, 712]),
        ...gridY.map((y) => [388, y + 0.5, 716, y + 0.5]),
      ]}
    />
    <CadLabel x="556" y="399" $fill="#555">500</CadLabel>
    <CadLabel x="399" y="556" $fill="#555">-500</CadLabel>
    <CadLabel x="555" y="556" $fill="#555">0</CadLabel>
    <CadLabel x="713" y="556" $fill="#555">500</CadLabel>
    <CadLabel x="556" y="713" $fill="#555">-500</CadLabel>

    <polygon
      points="420,361 483,361 483,442 686,646 686,736 608,736 608,655 420,467"
      fill="none"
      stroke="#fff"
      strokeWidth="2.500"
    />
    <Lines color="#2fe82f" data={greenDims} />
    <Lines color="#1f9e1f" data={thinGreens} />
    <Lines color="#e8161a" width="3" cap="round" data={redBars} />
    <Dots data={yellowDots} color="#f2e23a" inner="#e8a820" />
    <Dots data={tealDots} color="#3fd0c8" inner="#b0e8e8" />
    <Dots data={pinkDots} color="#c83ae0" inner="#e060f0" />

    <Lines color="#fff" data={[[485, 360, 515, 330]]} />
    <CnLabel x="516" y="307.500">全部纵筋</CnLabel>
    <CnLabel x="516" y="319.500">箍筋</CnLabel>
    <CnLabel x="516" y="333">其它纵筋</CnLabel>
    <CadLabel x="573" y="308" $anchor="start" $fill="#2fd02f">16C22</CadLabel>
    <CadLabel x="573" y="320" $anchor="start" $fill="#2fd02f">C8@200</CadLabel>
    <CadLabel x="573" y="333" $anchor="start" $fill="#2fd02f">4C16</CadLabel>

    <CadLabel x="453" y="341">199</CadLabel>
    <CadLabel x="396" y="418">336</CadLabel>
    <CadLabel x="508" y="406">258</CadLabel>
    <CadLabel x="602" y="531">911</CadLabel>
    <CadLabel x="497" y="584">846</CadLabel>
    <CadLabel x="582" y="701">257</CadLabel>
    <CadLabel x="711" y="696">288</CadLabel>
    <CadLabel x="647" y="766">250</CadLabel>
  </svg>
);

const outerTicks = [292, 368, 443, 742, 815, 928];

const rebarKnots = [
  [320, 305], [415, 310], [330, 372], [412, 484], [320, 520], [432, 625], [470, 668],
  [550, 622], [545, 742], [622, 692], [635, 828], [712, 782], [752, 825],
  [900, 965], [895, 1115], [768, 1142], [765, 970],
];

const RefDim = ({ x, y = 1260, len, rotate, children }) => (
  <text
    x={x}
    y={y}
    textLength={len}
    lengthAdjust="spacingAndGlyphs"
    transform={rotate ? `rotate(-90 ${x} ${y})` : undefined}
    fontFamily="Liberation Sans, sans-serif"
    fontSize="65"
    fill="#b5b5b5"
  >
    {children}
  </text>
);

const ReferenceDrawing = () => (
  <svg width="332" height="452" viewBox="33 15 996 1356">
    <circle cx="369" cy="129" r="74" fill="none" stroke="#c8c8c8" strokeWidth="2.500" />
    <circle cx="815" cy="129" r="74" fill="none" stroke="#c8c8c8" strokeWidth="2.500" />
    <Lines
      color="#9a1414"
      width="3"
      data={[
        [369, 205, 369, 912], [369, 990, 369, 1285],
        [815, 205, 815, 460], [815, 540, 815, 930], [815, 1000, 815, 1345],
        [192, 950, 420, 950], [495, 950, 865, 950], [945, 950, 1029, 950],
        [365, 495, 560, 690], [620, 750, 810, 945],
      ]}
    />
    <polyline
      points="292,278 442,278 442,470 928,958 928,1174 740,1174 740,982 292,530 292,278"
      fill="none"
      stroke="#a89a28"
      strokeWidth="3"
    />
    <polygon
      points="310,295 428,295 428,478 915,965 915,1155 757,1155 757,975 310,525"
      fill="none"
      stroke="#f01010"
      strokeWidth="11"
      strokeLinejoin="round"
    />
    <Lines
      color="#f01010"
      width="9"
      cap="round"
      data={[
        [320, 296, 320, 372], [322, 378, 425, 480], [425, 480, 425, 620], [425, 620, 545, 745],
        [757, 820, 757, 975], [757, 975, 895, 1115], [895, 1115, 900, 1150],
        [483, 688, 545, 610], [555, 757, 620, 680], [640, 845, 705, 770],
        [756, 1140, 780, 1140], [895, 965, 910, 965], [410, 300, 426, 312],
      ]}
    />
    <Lines
      color="#f01010"
      width="5"
      data={[
        [545, 630, 565, 630], [620, 700, 640, 700], [705, 790, 725, 790],
        [470, 660, 480, 645], [545, 735, 555, 720], [630, 825, 640, 810],
        [425, 620, 445, 620], [745, 825, 765, 825], [410, 482, 430, 482],
      ]}
    />
    {rebarKnots.map((k, i) => (
      <circle key={i} cx={k[0]} cy={k[1]} r="9" fill="#f01010" />
    ))}
    <Lines
      color="#1fd01f"
      width="2.500"
      data={[
        [133, 278, 262, 278], [133, 503, 262, 503], [133, 278, 133, 503],
        [292, 1282, 930, 1282],
        ...outerTicks.map((x) => [x, 1220, x, 1298]),
      ]}
    />
    <Lines
      color="#1fd01f"
      width="6"
      data={[
        [127, 272, 140, 287], [127, 497, 140, 512],
        ...outerTicks.map((x) => [x - 6, 1292, x + 6, 1272]),
      ]}
    />
    <RefDim x="207" len="81">100</RefDim>
    <RefDim x="445" len="293">100 400 100</RefDim>
    <RefDim x="832" len="81">150</RefDim>
    <RefDim x="113" y="432" len="87" rotate>300</RefDim>
    <rect x="33" y="1345" width="996" height="4" fill="#b8b8b8" />
  </svg>
);

/* ---------- data ---------- */

const menus = [
  ["构件(N)", 52], ["绘图(D)", 52], ["修改(M)", 52], ["钢筋量(Q)", 64], ["视图(V)", 52],
  ["工具(T)", 52], ["云应用(Y)", 63], ["BIM应用(I)", 71], ["在线服务(S)", 76],
  ["帮助(H)", 52], ["版本号(B)", 61],
];

const dialogActions = ["布角筋", "布边筋", "特殊布筋", "对齐钢筋"];
const dialogActions2 = ["修改纵筋", "修改箍筋", "编辑弯钩", "端头伸缩"];
const rowNumbers = [3, 4, 5, 6, 7, 8, 9];
const foldRows = [10, 15, 27, 42];

export default function App() {
  return (
    <>
      <GlobalStyle />
      <Screen>
        <LeftWindow>
          <TitleBar>
            <TitleText>软件 GGJ2013 - [D:\预结算及抽筋\广联达抽筋\测试-2.GGJ12]</TitleText>
            <WinButtons>
              <WinButton>
                <Ic w={10} h={10}><rect x="1" y="6" width="6" height="3" fill="#fff" /></Ic>
              </WinButton>
              <WinButton>
                <Ic w={12} h={12}><path d="M1 1.500h10v9.500H1z" fill="none" stroke="#fff" strokeWidth="1.500" /><path d="M1 2h10" stroke="#fff" strokeWidth="2" /></Ic>
              </WinButton>
              <WinButton $close>
                <Ic w={12} h={12}><path d="M1.500 1.500l9 9M10.500 1.500l-9 9" stroke="#fff" strokeWidth="2.500" /></Ic>
              </WinButton>
            </WinButtons>
          </TitleBar>

          <MenuBar>
            {menus.map(([label, w]) => (
              <MenuItem key={label} $w={w}>{label}</MenuItem>
            ))}
            <Helmet />
            <Account>
              forpk.chen@163.com
              <Caret $c="#333" />
            </Account>
          </MenuBar>

          <ToolBar $h={27}>
            <ToolItem $w={52} $gap={2}><GlobeIcon />绘图</ToolItem>
            <ToolItem $w={73} $gap={7}><SumMark>Σ</SumMark>汇总计算</ToolItem>
            <ToolItem $w={73} $off><BoxOff />平齐板顶</ToolItem>
            <ToolItem $w={77} $off><BinocularsOff />查找图元</ToolItem>
            <ToolItem $w={86} $off><HookOff />查看钢筋量</ToolItem>
            <ToolItem $w={75} $off><GridIcon />批量选择</ToolItem>
            <ToolItem $w={97} $off><GridIcon />钢筋三维</ToolItem>
            <More $w={12}>»</More>
            <ViewSelect>
              <Ic w={14} h={12}><rect x=".5" y="1.500" width="13" height="9" fill="#e6e5da" stroke="#bbb" /></Ic>
              二维
              <Caret $m={1} $c="#b0afa2" />
            </ViewSelect>
            <ToolItem $w={62} $ml={5} $off><CubeOff />俯视<Caret $m={7} $c="#aaa" /></ToolItem>
            <ToolItem $w={74} $off><OrbitOff />动态观察</ToolItem>
            <ToolItem $w={106} $off><PartOff />局部三维</ToolItem>
            <More>»</More>
          </ToolBar>

          <ToolBar $h={26} $pad={14}>
            <ToolItem $w={60} $gap={2}><NewIcon />新建<Caret $m={2} /></ToolItem>
            <ToolItem $w={49} $ml={1} $gap={5}><CrossIcon />删除</ToolItem>
            <ToolItem $w={52} $gap={4}><CopyIcon />复制</ToolItem>
            <ToolItem $w={59} $gap={4}><RenameIcon />重命名</ToolItem>
            <ToolSep $m={2} />
            <ToolItem $w={30}>楼层</ToolItem>
            <FloorSelect>首层<Caret /></FloorSelect>
            <ToolSep $m={4} $mr={8} />
            <ToolItem $w={60} $gap={4}><SortIcon />排序<Caret $m={3} /></ToolItem>
            <ToolItem $w={55} $gap={3}><FunnelIcon />过滤<Caret $m={2} /></ToolItem>
            <ToolSep $m={3} />
            <ToolItem $w={135} $ml={1} $gap={3}><FloorCopyIcon />从其他楼层复制构件</ToolItem>
            <ToolItem $w={130} $gap={3}><FloorCopyIcon flip />复制构件到其他楼层</ToolItem>
            <ToolSep $m={0} />
            <ToolItem $w={41} $ml={6}>查找<Caret $m={3} /></ToolItem>
            <ToolSep $m={0} />
            <ToolItem $w={56} $gap={6} $ml={3}><UpIcon />上移</ToolItem>
            <More>»</More>
          </ToolBar>

          <Body>
            <LeftRail>
              <RailButton />
              <RailColumn />
            </LeftRail>
            <Sidebar>
              <SearchRow>
                <SearchInput>搜索构件...</SearchInput>
                <SearchButton><SearchGlass /></SearchButton>
              </SearchRow>
              <TreePanel>
                <TreeRoot>
                  <Expander />
                  <ColumnIcon />
                  框柱
                </TreeRoot>
                <TreeBranch>
                  <TreeRow><GearIcon /><TreeLabel>KZ-1</TreeLabel></TreeRow>
                  <TreeRow><GearIcon /><TreeLabel>KZ-2</TreeLabel></TreeRow>
                  <TreeRow><GearIcon /><TreeLabel $sel>KZ-3</TreeLabel></TreeRow>
                </TreeBranch>
              </TreePanel>
            </Sidebar>

            <MainPanel>
              <PanelTab>属性编辑</PanelTab>
              <PanelBody>
                <TableFrame>
                  <Grid>
                    <GridRow $h={23}>
                      <NumCell />
                      <HeadCell $w={191}>属性名称</HeadCell>
                      <HeadCell $w={127} $hot>属性值</HeadCell>
                      <HeadCell $w={31}>附加</HeadCell>
                    </GridRow>
                    <GridRow $h={19}>
                      <NumCell $on>1</NumCell>
                      <Cell $w={191} $pad={20} $bg="#3a68b8" $c="#fff">名称</Cell>
                      <Cell $w={127} $pad={2} $bg="#dfe8f4">KZ-3</Cell>
                      <Cell $w={31} />
                    </GridRow>
                    <GridRow $h={19}>
                      <NumCell>2</NumCell>
                      <Cell $w={191} $pad={20} $c="#1c1ccb">类别</Cell>
                      <Cell $w={127} $pad={2}>框架柱</Cell>
                      <Cell $w={31}><CheckBox /></Cell>
                    </GridRow>
                    {rowNumbers.map((n) => (
                      <GridRow key={n} $h={19}>
                        <NumCell>{n}</NumCell>
                        <Cell $w={191} />
                      </GridRow>
                    ))}
                    {foldRows.map((n) => (
                      <GridRow key={n} $h={19}>
                        <NumCell>{n}</NumCell>
                        <Cell $w={191}><PlusBox>+</PlusBox></Cell>
                      </GridRow>
                    ))}
                  </Grid>
                  <ScrollBar>
                    <ScrollUp>
                      <Ic w={9} h={6}><path d="M1 5l3.500-3.500L8 5" fill="none" stroke="#3a5a9a" strokeWidth="1.600" /></Ic>
                    </ScrollUp>
                    <ScrollThumb />
                  </ScrollBar>
                </TableFrame>
              </PanelBody>
            </MainPanel>
          </Body>

          <Dialog>
            <DialogTitle>截面编辑</DialogTitle>
            <DialogTabs>
              <DialogTab>截面</DialogTab>
              <DialogTab $on>配筋</DialogTab>
            </DialogTabs>
            <DialogBody>
              <DialogRow $h={21}>
                <Grip />
                {dialogActions.map((t) => (
                  <DialogAction key={t}>{t}</DialogAction>
                ))}
                <DialogAction $on>画箍筋</DialogAction>
                <ToolSep $m={3} />
                <ActionGap />
                {dialogActions2.map((t) => (
                  <DialogAction key={t}>{t}</DialogAction>
                ))}
                <DialogAction $off>删除</DialogAction>
              </DialogRow>
              <DialogRow $h={23}>
                <Grip />
                <RebarLabel>钢筋信息</RebarLabel>
                <RebarSelect>
                  C8@200
                  <RebarArrow><Caret $m={0} /></RebarArrow>
                </RebarSelect>
              </DialogRow>
              <Canvas>
                <SectionDrawing />
                <Palette>
                  <PaletteTitle>绘制箍筋</PaletteTitle>
                  <PaletteRow>
                    <PaletteBtn $mr={6}>矩形</PaletteBtn>
                    <PaletteBtn $on $mr={6}>直线</PaletteBtn>
                    <PaletteBtn>三点画弧</PaletteBtn>
                    <Caret $m={6} />
                    <PaletteSelect><Caret $m={0} $c="#555" /></PaletteSelect>
                  </PaletteRow>
                </Palette>
              </Canvas>
            </DialogBody>
          </Dialog>
        </LeftWindow>

        <RightWindow>
          <BrowserTop>
            <TopChevron $w={16}>&gt;</TopChevron>
            <TopLink $w={41}>文件</TopLink>
            <TopLink $w={41}>查看</TopLink>
            <TopLink $w={30}>收藏</TopLink>
          </BrowserTop>
          <AddressBar>
            <Host>xgx.com</Host>
            <UrlPath>/question/giml/list</UrlPath>
            <AddressIcons>
              <QrIcon />
              <BoltIcon />
            </AddressIcons>
          </AddressBar>
          <BookmarkBar>
            <Bookmark $w={72}><MailIcon />139邮箱</Bookmark>
            <Chevrons $w={42}>»</Chevrons>
            <Bookmark $w={18}><Grip /></Bookmark>
            <Bookmark $w={70}><ExtendIcon />扩展<Caret $m={13} $c="#777" /></Bookmark>
            <Bookmark $w={69}><ShieldIcon />网银<Caret $m={13} $c="#777" /></Bookmark>
            <Bookmark $w={70}><TranslateIcon />翻译<Caret $m={13} $c="#777" /></Bookmark>
            <OrangeIcon />
          </BookmarkBar>
          <TabStrip>
            <CutTabClose>×</CutTabClose>
            <BrowserTab $w={220}>
              <SiteIcon />
              专业造价问题答疑平台-广联达
              <TabClose>×</TabClose>
            </BrowserTab>
            <BrowserTab $w={200} $ml={3} $pad={11} $on>
              <SiteIcon />
              专业造价问题答疑平台-广联达
            </BrowserTab>
          </TabStrip>
          <QuestionList>
            <ClippedRow>
              <LinkText $s={14}>如何让清单序号全部连贯，而不是按分部</LinkText>
              <Reward $m={8} $top={4}><CoinIcon /></Reward>
              <Reward $m={1}>5</Reward>
              <LinkText $c="#333" $ml={3} $top={1}>[报表]</LinkText>
            </ClippedRow>
            <QuestionTitle>
              <LinkText $s={14}>新建异形柱</LinkText>
              <Reward $m={9}><CoinIcon /></Reward>
              <Reward $s={13} $m={1}>5</Reward>
              <LinkText $c="#333" $s={11.5} $ml={3}>[钢筋抽样GGJ2013]</LinkText>
            </QuestionTitle>
          </QuestionList>
          <MetaRow>
            提问者：<Asker>LaugHing</Asker>
            <MetaSep $m={14}>|</MetaSep>
            悬赏分：5分
            <MetaSep $m={13}>|</MetaSep>
            回答次数：0次
          </MetaRow>
          <QuestionText>这样的异形柱怎样在广联达钢筋算量里面怎么画</QuestionText>
          <ShareBar>
            <ShareItem $w={101}><PhoneSendIcon />发送到手机</ShareItem>
            <ShareItem $w={34}><CloudIcon /></ShareItem>
          </ShareBar>
          <CadImage>
            <ReferenceDrawing />
          </CadImage>
          <InsertPanel>
            <InsertHead><PictureIcon />插入图片</InsertHead>
            <InsertBox />
          </InsertPanel>
        </RightWindow>
      </Screen>
    </>
  );
}
